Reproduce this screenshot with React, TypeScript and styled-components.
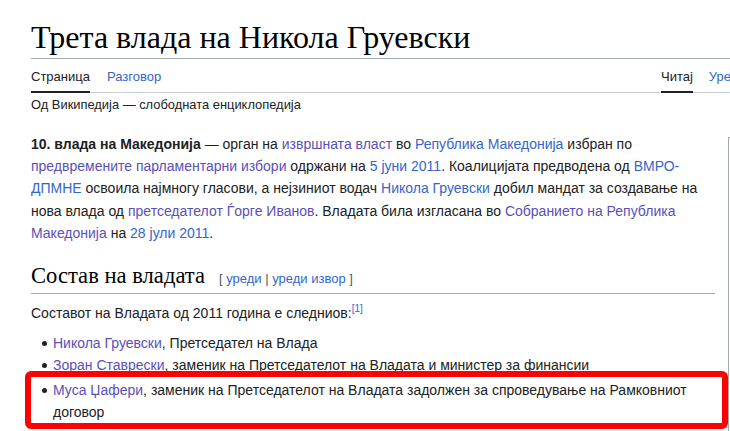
import styled, { createGlobalStyle } from "styled-components";

const GlobalStyle = createGlobalStyle`
  html, body {
    margin: 0;
    padding: 0;
    background: #ffffff;
    overflow: hidden;
  }
  body {
    font-family: "Liberation Sans", Arial, sans-serif;
    color: #202122;
  }
`;

const Viewport = styled.div`
  width: 730px;
  height: 431px;
  overflow: hidden;
`;

const Page = styled.div`
  width: 1000px;
  padding-left: 31px;
`;

const Title = styled.h1`
  margin: 0;
  padding-top: 17px;
  font-family: "Liberation Serif", "Times New Roman", serif;
  font-weight: normal;
  font-size: 32px;
  line-height: 41px;
  color: #000000;
  border-bottom: 1px solid #a2a9b1;
`;

const TabBar = styled.div`
  display: flex;
  border-bottom: 1px solid #c8ccd1;
  height: 34px;
  box-sizing: border-box;
`;

const TabGroup = styled.div<{ $basis?: number; $gap: number }>`
  display: flex;
  gap: ${(p) => p.$gap}px;
  flex: 0 0 ${(p) => (p.$basis ? `${p.$basis}px` : "auto")};
`;

const Tab = styled.span<{ $active?: boolean }>`
  display: flex;
  align-items: center;
  padding-top: 3px;
  height: 34px;
  box-sizing: border-box;
  font-size: 13px;
  color: ${(p) => (p.$active ? "#202122" : "#3366cc")};
  border-bottom: 2px solid ${(p) => (p.$active ? "#202122" : "transparent")};
  margin-bottom: -1px;
`;

const Tagline = styled.div`
  font-size: 12.9px;
  line-height: 20px;
  padding-top: 2px;
  color: #202122;
`;

const Content = styled.div`
  padding-top: 18px;
  font-size: 14px;
  line-height: 22.2px;
`;

const Infobox = styled.div`
  float: right;
  width: 303px;
  height: 400px;
  box-sizing: border-box;
  margin: 4px 0 8px 13px;
  border: 1px solid #a2a9b1;
  background: #ffffff;
`;

const Para = styled.p`
  margin: 0;
`;

const Link = styled.a<{ $visited?: boolean }>`
  color: ${(p) => (p.$visited ? "#5b4fb8" : "#3366cc")};
  text-decoration: none;
`;

const Heading = styled.h2`
  margin: 18px 0 0;
  display: flex;
  align-items: baseline;
  gap: 14px;
  font-weight: normal;
  font-size: 22.6px;
  line-height: 28px;
  font-family: "Liberation Serif", "Times New Roman", serif;
  color: #000000;
  border-bottom: 1px solid #a2a9b1;
  overflow: hidden;
`;

const EditLinks = styled.span`
  font-family: "Liberation Sans", Arial, sans-serif;
  font-size: 13px;
  color: #54595d;
`;

const Lead = styled.p`
  margin: 8px 0 0;
`;

const Sup = styled.sup`
  font-size: 10px;
  line-height: 1;
`;

const List = styled.ul`
  margin: 8px 0 0;
  padding: 0;
  list-style: none;
`;

const Item = styled.li`
  position: relative;
  padding-left: 22px;
  &::before {
    content: "";
    position: absolute;
    left: 11px;
    top: 9px;
    width: 5px;
    height: 5px;
    border-radius: 50%;
    background: #202122;
  }
`;

// red annotation frame drawn over the end of the previous item
const HighlightItem = styled(Item)`
  width: 703px;
  box-sizing: border-box;
  margin: -6px 0 0 -6px;
  padding-top: 2px;
  border: 6px solid #ff0000;
  border-radius: 6px;
  background: #ffffff;
  &::before {
    top: 11px;
  }
`;

export default function App() {
  return (
    <Viewport>
      <GlobalStyle />
      <Page>
        <Title>Трета влада на Никола Груевски</Title>
        <TabBar>
          <TabGroup $basis={630} $gap={17}>
            <Tab $active>Страница</Tab>
            <Tab>Разговор</Tab>
          </TabGroup>
          <TabGroup $gap={16}>
            <Tab $active>Читај</Tab>
            <Tab>Уреди</Tab>
            <Tab>Уреди извор</Tab>
            <Tab>Историја</Tab>
          </TabGroup>
        </TabBar>
        <Tagline>Од Википедија — слободната енциклопедија</Tagline>
        <Content>
          <Infobox />
          <Para>
            <b>10. влада на Македонија</b> — орган на <Link $visited>извршната власт</Link> во{" "}
            <Link>Република Македонија</Link> избран по{" "}
            <Link $visited>предвремените парламентарни избори</Link> одржани на <Link>5 јуни 2011</Link>.
            Коалицијата предводена од <Link>ВМРО-ДПМНЕ</Link> освоила најмногу гласови, а нејзиниот водач{" "}
            <Link>Никола Груевски</Link> добил мандат за создавање на нова влада од{" "}
            <Link $visited>претседателот Ѓорге Иванов</Link>. Владата била изгласана во{" "}
            <Link $visited>Собранието на Република Македонија</Link> на <Link>28 јули 2011</Link>.
          </Para>
          <Heading>
            Состав на владата
            <EditLinks>
              [ <Link>уреди</Link> | <Link>уреди извор</Link> ]
            </EditLinks>
          </Heading>
          <Lead>
            Составот на Владата од 2011 година е следниов:
            <Sup>
              <Link>[1]</Link>
            </Sup>
          </Lead>
          <List>
            <Item>
              <Link $visited>Никола Груевски</Link>, Претседател на Влада
            </Item>
            <Item>
              <Link $visited>Зоран Ставрески</Link>, заменик на Претседателот на Владата и министер за финансии
            </Item>
            <HighlightItem>
              <Link $visited>Муса Џафери</Link>, заменик на Претседателот на Владата задолжен за спроведување на
              Рамковниот договор
            </HighlightItem>
          </List>
        </Content>
      </Page>
    </Viewport>
  );
}
